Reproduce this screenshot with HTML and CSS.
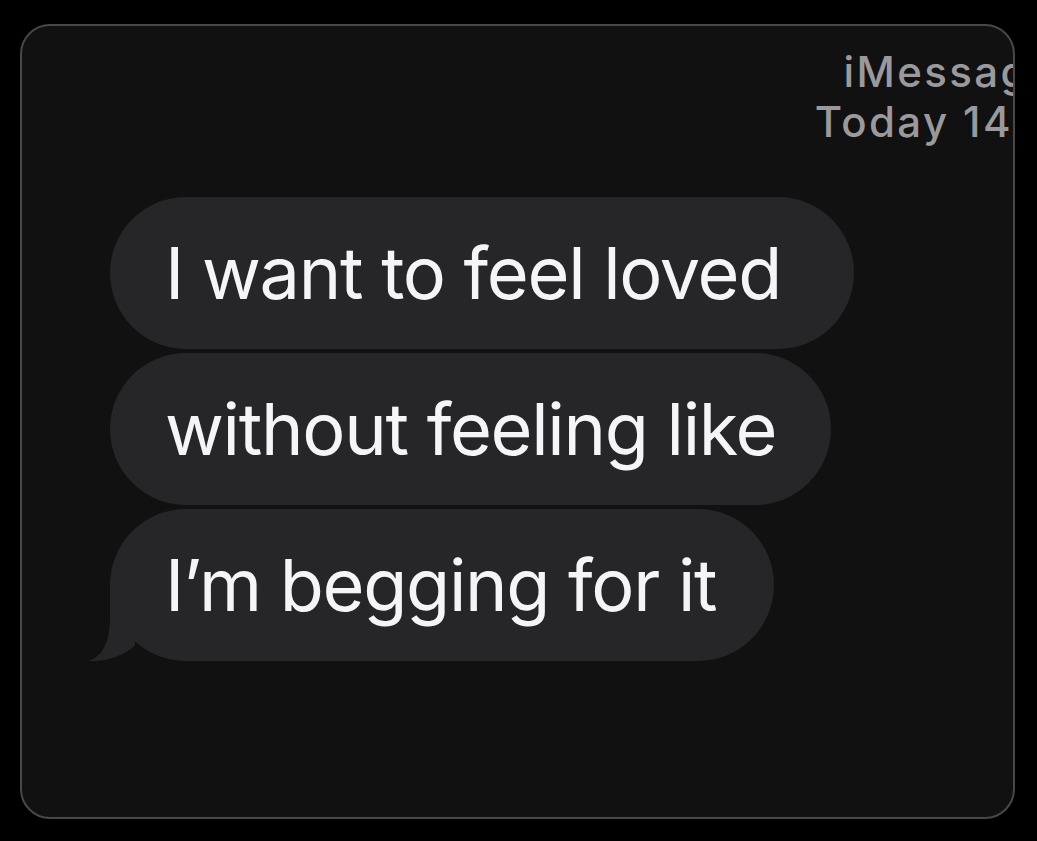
FILE: index.html
```html
<!DOCTYPE html>
<html>
<head>
<meta charset="utf-8">
<link rel="stylesheet" href="styles.css">
</head>
<body>
<div class="card">
  <div class="meta">
    <div class="meta-text">
      <div>iMessage</div>
      <div>Today 14:23</div>
    </div>
  </div>
  <div class="thread">
    <div class="bubble first">I want to feel loved</div>
    <div class="bubble">without feeling like</div>
    <div class="bubble last">I’m begging for it
      <svg class="tail" width="50" height="80" viewBox="-25 -80 50 80" aria-hidden="true">
        <path d="M0 -80 L0 -44 C0 -18 -8 -4 -22 0 C-6 1 12 -4 27 -17 L45 -6 L45 -80 Z" fill="#262628"/>
      </svg>
    </div>
  </div>
</div>
</body>
</html>
```
FILE: styles.css
```css
html, body {
  margin: 0;
  padding: 0;
  background: #000;
}
body {
  width: 1037px;
  height: 841px;
  padding-top: 24px;
  padding-left: 20px;
  box-sizing: border-box;
  font-family: "Inter", "Liberation Sans", sans-serif;
}
.card {
  width: 995px;
  height: 795px;
  box-sizing: border-box;
  border: 2px solid #48484a;
  border-radius: 30px;
  background: #111112;
  overflow: hidden;
}
.meta {
  display: flex;
  justify-content: flex-end;
  padding-top: 21px;
}
.meta-text {
  flex: none;
  margin-right: -72px;
  text-align: center;
  font-size: 42px;
  font-weight: 500;
  line-height: 50px;
  letter-spacing: 2.4px;
  color: #9a9a9e;
  white-space: nowrap;
}
.thread {
  display: flex;
  flex-direction: column;
  align-items: flex-start;
  gap: 4px;
  margin-top: 50px;
  padding-left: 88px;
}
.bubble {
  position: relative;
  height: 152px;
  line-height: 152px;
  padding: 0 55px 0 55px;
  border-radius: 76px;
  background: #262628;
  color: #f5f5f7;
  font-size: 72px;
  letter-spacing: -1.3px;
  white-space: nowrap;
}
.bubble.first {
  padding-right: 73px;
}
.bubble.last {
  padding-right: 58px;
}
.tail {
  position: absolute;
  left: -25px;
  bottom: 0;
  display: block;
}
```
